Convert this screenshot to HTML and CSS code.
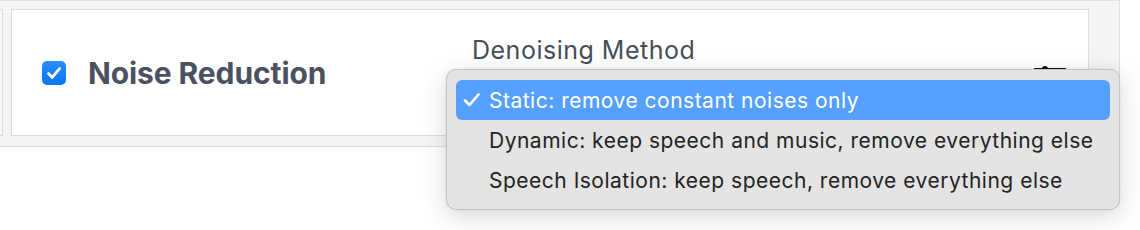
FILE: index.html
```html
<!DOCTYPE html>
<html>
<head>
<meta charset="utf-8">
<link rel="stylesheet" href="styles.css">
</head>
<body>
<div class="panel">
  <div class="prev-card"></div>
  <div class="card">
    <label class="toggle">
      <span class="checkbox">
        <svg width="24" height="24" viewBox="0 0 24 24"><path d="M6.5 12.5 L10.2 16.4 L17.6 7.6" fill="none" stroke="#fff" stroke-width="2.8" stroke-linecap="round" stroke-linejoin="round"/></svg>
      </span>
      <span class="title">Noise Reduction</span>
    </label>
    <div class="field">
      <div class="field-label">Denoising Method</div>
      <div class="field-control">
        <svg class="sliders" width="32" height="28" viewBox="0 0 32 28"><path d="M0 5 H32 M0 14 H32 M0 23 H32" stroke="#111" stroke-width="2"/><circle cx="11" cy="5" r="3" fill="#111"/><circle cx="22" cy="14" r="3" fill="#111"/><circle cx="8" cy="23" r="3" fill="#111"/></svg>
      </div>
    </div>
  </div>
</div>
<div class="menu">
  <div class="item selected"><span class="check"><svg width="18" height="14" viewBox="0 0 18 14"><path d="M2 7.5 L6.5 12 L15.5 1.5" fill="none" stroke="#fff" stroke-width="2.6" stroke-linecap="round" stroke-linejoin="round"/></svg></span><span>Static: remove constant noises only</span></div>
  <div class="item"><span class="check"></span><span>Dynamic: keep speech and music, remove everything else</span></div>
  <div class="item"><span class="check"></span><span>Speech Isolation: keep speech, remove everything else</span></div>
</div>
</body>
</html>
```
FILE: styles.css
```css
html, body {
  margin: 0;
  padding: 0;
  background: #ffffff;
  font-family: Inter, "Noto Sans", sans-serif;
}
.panel {
  width: 1120px;
  box-sizing: border-box;
  background: #f4f4f4;
  border-top: 1px solid #e2e2e2;
  border-right: 1px solid #dedede;
  border-bottom: 1px solid #dedede;
  padding: 8px 30px 10px 0;
  display: flex;
  gap: 8px;
}
.prev-card {
  width: 3px;
  box-sizing: border-box;
  border: 1px solid #dcdcdc;
  border-left: none;
  background: #f7f7f7;
}
.card {
  flex: 1;
  height: 127px;
  box-sizing: border-box;
  background: #fff;
  border: 1px solid #dcdcdc;
  display: flex;
  align-items: center;
}
.toggle {
  width: 460px;
  box-sizing: border-box;
  padding-left: 30px;
  display: flex;
  align-items: center;
  gap: 22px;
}
.checkbox {
  width: 24px;
  height: 24px;
  border-radius: 5px;
  background: linear-gradient(#2a8dfb, #0a74f6);
  display: flex;
}
.title {
  font-size: 30px;
  font-weight: 700;
  color: #4a5262;
  letter-spacing: -0.1px;
}
.field {
  flex: 1;
  align-self: flex-start;
  padding-top: 25px;
  padding-right: 22px;
  display: flex;
  flex-direction: column;
}
.field-label {
  font-size: 25px;
  line-height: 30px;
  letter-spacing: 0.5px;
  color: #464e5b;
}
.field-control {
  display: flex;
  justify-content: flex-end;
  align-items: flex-start;
}
.sliders {
  margin-top: -1px;
}
.menu {
  position: absolute;
  left: 446px;
  top: 69px;
  width: 674px;
  height: 141px;
  box-sizing: border-box;
  background: #e4e4e4;
  border: 1px solid #c4c4c4;
  border-radius: 10px;
  padding: 10px 9px 9px 9px;
  box-shadow: 0 6px 24px rgba(0, 0, 0, 0.16), 0 0 2px rgba(0, 0, 0, 0.08);
  font-family: Inter, "Noto Sans", sans-serif;
}
.item {
  height: 40px;
  display: flex;
  align-items: center;
  font-size: 21px;
  letter-spacing: 0.5px;
  color: #232323;
  border-radius: 6px;
}
.item.selected {
  background: #55a0fc;
  color: #ffffff;
}
.check {
  width: 33px;
  box-sizing: border-box;
  padding-left: 7px;
  display: flex;
  align-items: center;
}
```
